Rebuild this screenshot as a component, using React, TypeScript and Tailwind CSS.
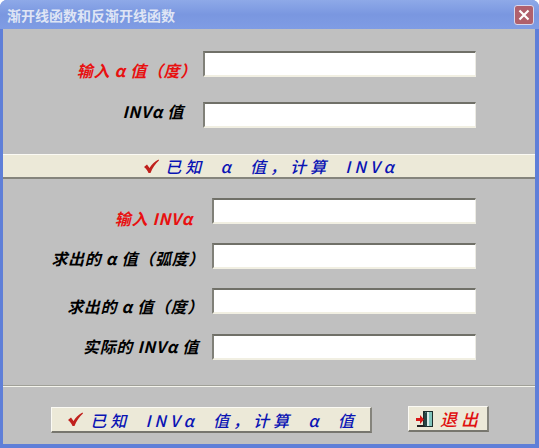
import React from 'react';

const font = "[font-family:'Noto_Sans_CJK_SC','Liberation_Sans',sans-serif]";

const Field = ({ label, color, mt, left, right, shift }: { label: string; color: string; mt: string; left: string; right: string; shift: string }) => (
  <div className={`flex items-center h-[26px] pr-[59px] ${mt}`}>
    <div className={`${left} flex justify-end shrink-0 ${right} ${shift}`}>
      <span className={`${font} ${color} text-[16px] leading-none italic font-bold tracking-[0.7px] whitespace-pre`}>{label}</span>
    </div>
    <div className="flex-1 h-[26px] bg-white border-t-2 border-l-2 border-t-[#707068] border-l-[#808078] border-r border-b-2 border-r-[#ecebe4] border-b-[#f1efe2]" />
  </div>
);

const Check = () => (
  <svg width="17" height="15" viewBox="0 0 17 15" className="shrink-0">
    <path d="M1 8 L4 5.5 L6.5 9 C8.5 5.5 11.5 2.5 15.5 0.5 L16 1.5 C12.5 4.5 9.5 9 7.5 14 L5.5 14 C4.5 11.5 3 9.5 1 8 Z" fill="#c0201c" />
  </svg>
);

const Door = () => (
  <svg width="18" height="18" viewBox="0 0 18 18" className="shrink-0">
    <rect x="7" y="1" width="10" height="16" fill="#1c2c2c" />
    <rect x="9" y="2" width="7" height="14" fill="#7fc4bc" />
    <rect x="11" y="2" width="2" height="14" fill="#d8ece8" />
    <path d="M8 3 L11 2 L11 17 L8 15 Z" fill="#274444" />
    <path d="M0 8 H4 V5 L8 9.5 L4 14 V11 H0 Z" fill="#d81818" />
    <rect x="1" y="15" width="7" height="2" fill="#222" />
  </svg>
);

const App = () => {
  return (
    <div className="w-[539px] h-[448px] flex flex-col rounded-t-[7px] overflow-hidden bg-[#5f7fd8]">
      {/* Title bar */}
      <div className="h-[29px] shrink-0 flex items-center justify-between pl-[7px] pr-[5px] bg-gradient-to-b from-[#8ea9e8] via-[#7a97e0] to-[#7f9ce4]">
        <span className={`${font} text-[14px] font-bold leading-none text-[#dfe5f5] whitespace-nowrap`}>渐开线函数和反渐开线函数</span>
        <div className="w-[20px] h-[20px] rounded-[3px] border border-[#d8d8ec] bg-[#b0606c] flex items-center justify-center">
          <svg width="12" height="12" viewBox="0 0 12 12">
            <path d="M1.5 1.5 L10.5 10.5 M10.5 1.5 L1.5 10.5" stroke="#fff" strokeWidth="2.2" />
          </svg>
        </div>
      </div>

      {/* Client area */}
      <div className="flex-1 mb-[4px] ml-[3px] mr-[4px] bg-[#c0c0c0] flex flex-col">
        <div className="pt-[22px]">
          <Field label="输入 α 值（度）" color="text-[#e81010]" mt="" left="w-[200px]" right="pr-[6px]" shift="pt-[12px]" />
          <Field label="INVα 值" color="text-black" mt="mt-[25px]" left="w-[200px]" right="pr-[19px]" shift="pb-[8px]" />
        </div>

        {/* Band */}
        <div className="mt-[26px] h-[25px] shrink-0 bg-[#ece9d8] border-t border-t-[#fbfaf4] border-b-2 border-b-[#85847c] flex items-center justify-center pl-[3px]">
          <Check />
          <span className={`${font} ml-[5px] text-[16px] italic font-medium leading-none text-[#0a14b4] tracking-[4px] whitespace-pre`}>已知  α  值，计算  INVα</span>
        </div>

        <div className="pt-[19px]">
          <Field label="输入 INVα" color="text-[#e81010]" mt="" left="w-[209px]" right="pr-[19px]" shift="pt-[14px]" />
          <Field label="求出的 α 值（弧度）" color="text-black" mt="mt-[19px]" left="w-[209px]" right="pr-[7px]" shift="pt-[4px]" />
          <Field label="求出的 α 值（度）" color="text-black" mt="mt-[19px]" left="w-[209px]" right="pr-[8px]" shift="pt-[10px]" />
          <Field label="实际的 INVα 值" color="text-black" mt="mt-[20px]" left="w-[209px]" right="pr-[13px]" shift="pb-[2px]" />
        </div>

        {/* Divider */}
        <div className="mt-[25px] h-[2px] shrink-0 border-t border-t-[#a0a098] border-b border-b-[#f4f4ec]" />

        {/* Buttons */}
        <div className="mt-[19px] flex items-center pl-[48px]">
          <div className="w-[321px] h-[26px] pl-[3px] bg-[#ece9d8] border-t border-l border-[#fbfaf4] border-b-2 border-r-2 border-b-[#77766e] border-r-[#85847c] flex items-center justify-center">
            <Check />
            <span className={`${font} ml-[6px] text-[16px] italic font-medium leading-none text-[#0a14b4] tracking-[4px] whitespace-pre`}>已知  INVα  值，计算  α  值</span>
          </div>
          <div className="ml-[36px] mb-[2px] w-[81px] h-[26px] pl-[2px] bg-[#ece9d8] border-t border-l border-[#fbfaf4] border-b-2 border-r-2 border-b-[#77766e] border-r-[#85847c] flex items-center justify-center">
            <Door />
            <span className={`${font} ml-[6px] text-[17px] italic font-medium leading-none text-[#e01010] tracking-[4px] whitespace-nowrap`}>退出</span>
          </div>
        </div>
      </div>
    </div>
  );
};

export default App;
